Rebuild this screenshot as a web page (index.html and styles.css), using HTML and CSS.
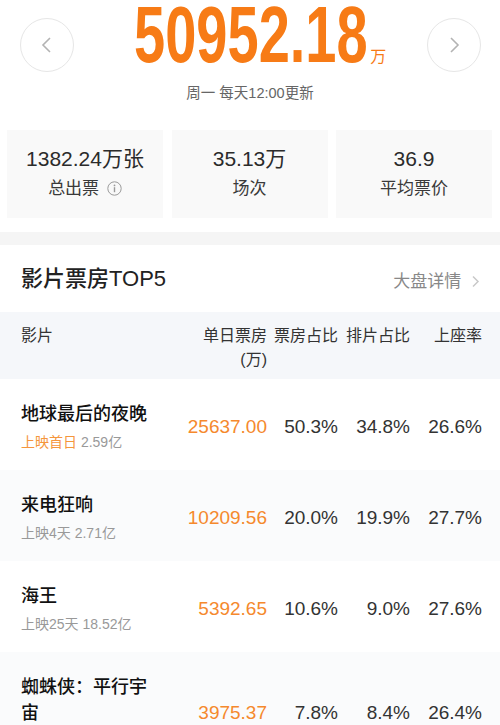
FILE: index.html
```html
<!DOCTYPE html>
<html>
	<head>
		<meta charset="utf-8">
		<title>大盘票房</title>
		<link rel="stylesheet" href="styles.css">
	</head>
	<body>
		<div class="hero">
			<span class="circle-btn">
				<svg width="52" height="52" viewBox="0 0 52 52"><path d="M29 19 L22 26 L29 33" fill="none" stroke="#b3b3b3" stroke-width="1.6"/></svg>
			</span>
			<div class="amount"><span class="amount-num">50952.18</span><span class="amount-unit">万</span></div>
			<span class="circle-btn">
				<svg width="52" height="52" viewBox="0 0 52 52"><path d="M23 19 L30 26 L23 33" fill="none" stroke="#b3b3b3" stroke-width="1.6"/></svg>
			</span>
		</div>
		<div class="update">周一 每天12:00更新</div>

		<!-- 三个统计卡片 -->
		<div class="stats">
			<div class="stat">
				<div class="stat-val">1382.24万张</div>
				<div class="stat-label">总出票
					<svg class="info" width="15" height="15" viewBox="0 0 15 15"><circle cx="7.5" cy="7.5" r="6.7" fill="none" stroke="#9a9a9a" stroke-width="1"/><circle cx="7.5" cy="4.4" r="0.9" fill="#9a9a9a"/><rect x="6.8" y="6.2" width="1.4" height="5" fill="#9a9a9a"/></svg>
				</div>
			</div>
			<div class="stat">
				<div class="stat-val">35.13万</div>
				<div class="stat-label">场次</div>
			</div>
			<div class="stat">
				<div class="stat-val">36.9</div>
				<div class="stat-label">平均票价</div>
			</div>
		</div>
		<div class="gap"></div>

		<div class="sec-head">
			<span class="sec-title">影片票房TOP5</span>
			<span class="sec-more">大盘详情
				<svg width="9" height="13" viewBox="0 0 9 13"><path d="M2 1.5 L7 6.5 L2 11.5" fill="none" stroke="#c9c9c9" stroke-width="1.5"/></svg>
			</span>
		</div>

		<div class="tb-head">
			<span class="c-name">影片</span>
			<span class="c-num">单日票房<br>(万)</span>
			<span class="c-num">票房占比</span>
			<span class="c-num">排片占比</span>
			<span class="c-num">上座率</span>
		</div>

		<div class="row">
			<div class="c-name">
				<div class="film">地球最后的夜晚</div>
				<div class="sub"><span class="hot">上映首日</span> 2.59亿</div>
			</div>
			<span class="c-num money">25637.00</span>
			<span class="c-num">50.3%</span>
			<span class="c-num">34.8%</span>
			<span class="c-num">26.6%</span>
		</div>
		<div class="row alt">
			<div class="c-name">
				<div class="film">来电狂响</div>
				<div class="sub">上映4天 2.71亿</div>
			</div>
			<span class="c-num money">10209.56</span>
			<span class="c-num">20.0%</span>
			<span class="c-num">19.9%</span>
			<span class="c-num">27.7%</span>
		</div>
		<div class="row">
			<div class="c-name">
				<div class="film">海王</div>
				<div class="sub">上映25天 18.52亿</div>
			</div>
			<span class="c-num money">5392.65</span>
			<span class="c-num">10.6%</span>
			<span class="c-num">9.0%</span>
			<span class="c-num">27.6%</span>
		</div>
		<div class="row alt">
			<div class="c-name">
				<div class="film">蜘蛛侠：平行宇宙</div>
				<div class="sub">上映19天 10.21亿</div>
			</div>
			<span class="c-num money">3975.37</span>
			<span class="c-num">7.8%</span>
			<span class="c-num">8.4%</span>
			<span class="c-num">26.4%</span>
		</div>
	</body>
</html>
```

FILE: styles.css
```css
*{
	padding: 0;
	margin: 0;
	box-sizing: border-box;
}
body{
	width: 500px;
	font-family: "Liberation Sans", "Noto Sans CJK SC", sans-serif;
	color: #333;
	background: #fff;
}
.hero{
	display: flex;
	justify-content: space-between;
	padding: 0 19px 0 20px;
}
.circle-btn{
	width: 54px;
	height: 54px;
	margin-top: 18px;
	border: 1px solid #e6e6e6;
	border-radius: 50%;
}
.circle-btn svg{
	display: block;
}
.amount{
	flex: 1;
	text-align: center;
	line-height: 70px;
	height: 70px;
	color: #f77b16;
	white-space: nowrap;
}
.amount-num{
	display: inline-block;
	font-size: 80px;
	font-weight: bold;
	transform: scaleX(0.7);
	margin: 0 -50px;
}
.amount-unit{
	font-size: 16px;
	margin-left: 3px;
	margin-right: -19px;
}
.update{
	margin-top: 11px;
	text-align: center;
	font-size: 14.5px;
	line-height: 20px;
	color: #666;
}
.stats{
	display: flex;
	gap: 8.5px;
	padding: 0 8px 0 7px;
	margin-top: 27px;
}
.stat{
	flex: 1;
	background: #f9f9f9;
	text-align: center;
	padding: 15px 0 17px;
}
.stat-val{
	font-size: 21px;
	line-height: 28px;
	color: #2b2b2b;
}
.stat-label{
	margin-top: 4px;
	font-size: 17px;
	line-height: 24px;
	color: #3a3a3a;
}
.info{
	vertical-align: -2px;
	margin-left: 3px;
}
.gap{
	height: 13px;
	margin-top: 14px;
	background: #f5f5f5;
}
.sec-head{
	display: flex;
	justify-content: space-between;
	align-items: center;
	padding: 19px 20px 18px 21px;
}
.sec-title{
	font-size: 22px;
	line-height: 30px;
	font-weight: 500;
	color: #222;
}
.sec-more{
	font-size: 17px;
	color: #888;
}
.sec-more svg{
	margin-left: 5px;
	vertical-align: -1px;
}
.tb-head, .row{
	display: grid;
	grid-template-columns: 1fr 107px 71px 72px 72px;
	padding: 0 18px 0 21px;
}
.tb-head{
	background: #f5f7fa;
	padding-top: 12px;
	padding-bottom: 7px;
	font-size: 16px;
	line-height: 24px;
	color: #333;
}
.c-num{
	text-align: right;
}
.row{
	align-items: center;
	padding-top: 22px;
	padding-bottom: 17px;
	font-size: 19px;
	color: #333;
}
.row.alt{
	background: #fafbfc;
}
.row .c-name{
	width: 139px;
}
.film{
	font-size: 18px;
	line-height: 26px;
	font-weight: 500;
	color: #111;
}
.sub{
	margin-top: 4px;
	font-size: 14px;
	line-height: 22px;
	color: #999;
}
.hot{
	color: #f5963c;
}
.money{
	color: #f5892d;
}
```
